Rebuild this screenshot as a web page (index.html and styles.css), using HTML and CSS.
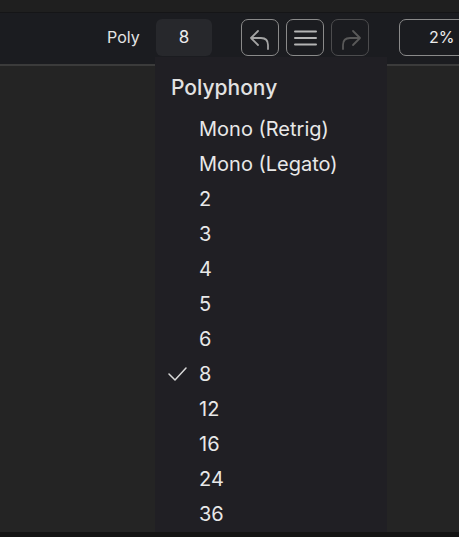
FILE: index.html
```html
<!DOCTYPE html>
<html>
<head>
<meta charset="utf-8">
<link rel="stylesheet" href="styles.css">
</head>
<body>
<div class="app">
  <div class="topstrip"></div>
  <div class="toolbar">
    <span class="label">Poly</span>
    <div class="valuebox">8</div>
    <div class="btns">
      <div class="btn">
        <svg width="38" height="37" viewBox="0 0 38 37"><path d="M17 12 L10 19 L17 26 M10 19 H20 Q27 19 27 26 V30" fill="none" stroke="#a4a4a4" stroke-width="1.8" stroke-linecap="round" stroke-linejoin="round"/></svg>
      </div>
      <div class="btn">
        <svg width="38" height="37" viewBox="0 0 38 37"><path d="M9 12.5 H30 M9 19 H30 M9 25.5 H30" fill="none" stroke="#b4b4b4" stroke-width="2" stroke-linecap="round"/></svg>
      </div>
      <div class="btn dim">
        <svg width="38" height="37" viewBox="0 0 38 37"><path d="M22 12 L29 19 L22 26 M29 19 H19 Q12 19 12 26 V30" fill="none" stroke="#595959" stroke-width="1.8" stroke-linecap="round" stroke-linejoin="round"/></svg>
      </div>
    </div>
    <div class="zoombox">2%</div>
  </div>
  <div class="divider"></div>
  <div class="content"></div>
  <div class="bottom"></div>

  <div class="menu">
    <div class="menu-title">Polyphony</div>
    <ul class="items">
      <li>Mono (Retrig)</li>
      <li>Mono (Legato)</li>
      <li>2</li>
      <li>3</li>
      <li>4</li>
      <li>5</li>
      <li>6</li>
      <li class="checked"><svg class="check" width="20" height="16" viewBox="0 0 20 16"><path d="M2 8 L8 14 L19 2" fill="none" stroke="#d8d8d8" stroke-width="1.5" stroke-linecap="round" stroke-linejoin="round"/></svg>8</li>
      <li>12</li>
      <li>16</li>
      <li>24</li>
      <li>36</li>
    </ul>
  </div>
</div>
</body>
</html>
```
FILE: styles.css
```css
* { box-sizing: border-box; }
html, body {
  margin: 0;
  padding: 0;
  width: 459px;
  height: 537px;
  overflow: hidden;
  background: #232323;
  font-family: Inter, "Noto Sans", sans-serif;
}
.app {
  position: relative;
  width: 459px;
  height: 537px;
  display: flex;
  flex-direction: column;
}
.topstrip {
  height: 13px;
  background: #1f1f1f;
  border-bottom: 1px solid #151517;
}
.toolbar {
  height: 51px;
  background: #1b1c20;
  display: flex;
  align-items: flex-start;
  padding-top: 6px;
  padding-left: 107px;
  white-space: nowrap;
  overflow: hidden;
}
.toolbar > * { flex: none; }
.label {
  color: #e4e4e4;
  font-size: 16px;
  line-height: 37px;
  width: 49px;
}
.valuebox {
  width: 56px;
  height: 37px;
  background: #27282c;
  border-radius: 6px;
  color: #ececec;
  font-size: 17px;
  line-height: 37px;
  text-align: center;
}
.btns {
  display: flex;
  gap: 7px;
  margin-left: 29px;
}
.btn {
  width: 38px;
  height: 37px;
  border: 1.5px solid #8a8a8a;
  border-radius: 7px;
  display: flex;
  align-items: center;
  justify-content: center;
}
.btn svg { display: block; flex: none; }
.btn.dim { border-color: #4c4c4e; }
.zoombox {
  margin-left: 30px;
  width: 90px;
  height: 37px;
  border: 1.5px solid #8a8a8a;
  border-radius: 7px;
  color: #ececec;
  font-size: 16px;
  line-height: 34px;
  padding-left: 29px;
}
.divider {
  height: 2px;
  background: #3b3b3b;
}
.content {
  flex: 1;
  background: #242424;
}
.bottom {
  height: 5px;
  background: #141414;
}
.menu {
  position: absolute;
  left: 155px;
  top: 57px;
  width: 232px;
  height: 475px;
  background: #201f24;
  padding-top: 13px;
}
.menu-title {
  height: 36px;
  line-height: 36px;
  padding-left: 16px;
  color: #e2e2e2;
  font-size: 21px;
  font-weight: 500;
}
.items {
  list-style: none;
  margin: 6px 0 0 0;
  padding: 0;
}
.items li {
  position: relative;
  height: 35px;
  line-height: 35px;
  padding-left: 44px;
  color: #e8e8e8;
  font-size: 20px;
}
.check {
  position: absolute;
  left: 12px;
  top: 9px;
}
```
